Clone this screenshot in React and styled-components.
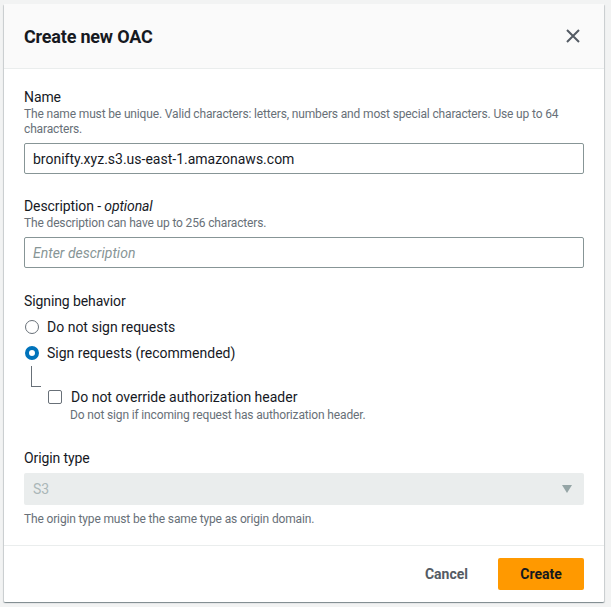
import styled, { createGlobalStyle } from "styled-components";
import { useState } from "react";

const GlobalStyle = createGlobalStyle`
  html, body {
    margin: 0;
    padding: 0;
    background: #f2f3f3;
    font-family: Roboto, "Noto Sans", sans-serif;
    color: #16191f;
  }
  * { box-sizing: border-box; }
`;

const Page = styled.div`
  width: 611px;
  height: 607px;
  padding: 4px 7px 0 4px;
  overflow: hidden;
`;

const Modal = styled.div`
  width: 600px;
  height: 598px;
  background: #fff;
  border-radius: 1px;
  box-shadow: 0 1px 1px rgba(0, 28, 36, 0.3), 1px 1px 1px rgba(0, 28, 36, 0.15), -1px 1px 1px rgba(0, 28, 36, 0.15);
  display: flex;
  flex-direction: column;
`;

const Header = styled.div`
  height: 65px;
  flex-shrink: 0;
  background: #fafafa;
  border-bottom: 1px solid #eaeded;
  display: flex;
  align-items: center;
  justify-content: space-between;
  padding: 0 22px 0 20px;
`;

const Title = styled.h2`
  margin: 0;
  font-size: 18px;
  font-weight: 700;
  letter-spacing: -0.2px;
`;

const Close = styled.button`
  border: none;
  background: none;
  padding: 0;
  width: 18px;
  height: 18px;
  display: flex;
  align-items: center;
  justify-content: center;
  cursor: pointer;
`;

const Body = styled.div`
  flex: 1;
  padding: 18px 20px 0 20px;
  display: flex;
  flex-direction: column;
`;

const Field = styled.div`
  margin-bottom: ${(p) => p.$gap || 0}px;
`;

const Label = styled.div`
  font-size: 14px;
  line-height: 20px;
  letter-spacing: -0.1px;
  margin-bottom: ${(p) => p.$mb || 0}px;
  em { font-style: italic; }
`;

const Hint = styled.div`
  font-size: 12px;
  line-height: 15px;
  color: #687078;
  letter-spacing: -0.15px;
  margin-bottom: ${(p) => p.$mb || 0}px;
  margin-top: ${(p) => p.$mt || 0}px;
  padding-left: ${(p) => p.$indent || 0}px;
`;

const Input = styled.input`
  display: block;
  width: 100%;
  height: 31px;
  border: 1px solid #879596;
  border-radius: 2px;
  padding: 0 8px;
  font-family: Roboto, "Noto Sans", sans-serif;
  font-size: 14px;
  color: #16191f;
  outline: none;
  &::placeholder {
    color: #879596;
    font-style: italic;
  }
`;

const RadioRow = styled.label`
  display: flex;
  align-items: center;
  gap: 8px;
  height: 26px;
  font-size: 14px;
  cursor: pointer;
  padding-left: 1px;
`;

const Radio = styled.span`
  width: 14px;
  height: 14px;
  border-radius: 50%;
  border: ${(p) => (p.$on ? "4px solid #0073bb" : "1.5px solid #687078")};
  background: #fff;
  flex-shrink: 0;
`;

const Nested = styled.div`
  display: flex;
  padding-left: 7px;
`;

const Connector = styled.div`
  width: 10px;
  height: 21px;
  border-left: 1px solid #687078;
  border-bottom: 1px solid #687078;
  flex-shrink: 0;
`;

const CheckBlock = styled.div`
  padding-top: 23px;
  padding-left: 7px;
`;

const CheckRow = styled.label`
  display: flex;
  align-items: center;
  gap: 9px;
  font-size: 14px;
  cursor: pointer;
`;

const Box = styled.span`
  width: 14px;
  height: 14px;
  border: 1.5px solid #687078;
  border-radius: 2px;
  background: #fff;
  flex-shrink: 0;
`;

const Select = styled.div`
  height: 32px;
  margin-top: 5px;
  background: #eaeded;
  border-radius: 2px;
  display: flex;
  align-items: center;
  justify-content: space-between;
  padding: 0 11px 0 9px;
  font-size: 14px;
  color: #aab7b8;
`;

const Footer = styled.div`
  border-top: 1px solid #eaeded;
  height: 57px;
  flex-shrink: 0;
  display: flex;
  align-items: center;
  justify-content: flex-end;
  gap: 30px;
  padding: 0 20px 1px 0;
  margin-top: auto;
`;

const LinkButton = styled.button`
  border: none;
  background: none;
  font-family: Roboto, "Noto Sans", sans-serif;
  font-weight: 700;
  font-size: 14px;
  color: #545b64;
  cursor: pointer;
  padding: 0;
`;

const Primary = styled.button`
  border: none;
  background: #ff9900;
  border-radius: 2px;
  width: 86px;
  height: 32px;
  font-family: Roboto, "Noto Sans", sans-serif;
  font-weight: 700;
  font-size: 14px;
  color: #16191f;
  cursor: pointer;
`;

export default function App() {
  const [name, setName] = useState("bronifty.xyz.s3.us-east-1.amazonaws.com");
  const [sign, setSign] = useState(true);

  return (
    <>
      <GlobalStyle />
      <Page>
        <Modal>
          <Header>
            <Title>Create new OAC</Title>
            <Close aria-label="Close">
              <svg width="14" height="14" viewBox="0 0 14 14">
                <path d="M1 1L13 13M13 1L1 13" stroke="#545b64" strokeWidth="2" />
              </svg>
            </Close>
          </Header>
          <Body>
            <Field $gap={22}>
              <Label>Name</Label>
              <Hint $mb={6}>
                The name must be unique. Valid characters: letters, numbers and most special characters. Use up to 64 characters.
              </Hint>
              <Input value={name} onChange={(e) => setName(e.target.value)} />
            </Field>
            <Field $gap={23}>
              <Label>
                Description - <em>optional</em>
              </Label>
              <Hint $mb={6}>The description can have up to 256 characters.</Hint>
              <Input placeholder="Enter description" />
            </Field>
            <Field $gap={25}>
              <Label $mb={3}>Signing behavior</Label>
              <RadioRow onClick={() => setSign(false)}>
                <Radio $on={!sign} />
                Do not sign requests
              </RadioRow>
              <RadioRow onClick={() => setSign(true)}>
                <Radio $on={sign} />
                Sign requests (recommended)
              </RadioRow>
              <Nested>
                <Connector />
                <CheckBlock>
                  <CheckRow>
                    <Box />
                    Do not override authorization header
                  </CheckRow>
                  <Hint $mt={3} $indent={22}>
                    Do not sign if incoming request has authorization header.
                  </Hint>
                </CheckBlock>
              </Nested>
            </Field>
            <Field>
              <Label>Origin type</Label>
              <Select>
                S3
                <svg width="12" height="10" viewBox="0 0 12 10">
                  <path d="M1 1H11L6 9Z" fill="#95a5a6" />
                </svg>
              </Select>
              <Hint $mt={7}>The origin type must be the same type as origin domain.</Hint>
            </Field>
          </Body>
          <Footer>
            <LinkButton>Cancel</LinkButton>
            <Primary>Create</Primary>
          </Footer>
        </Modal>
      </Page>
    </>
  );
}
